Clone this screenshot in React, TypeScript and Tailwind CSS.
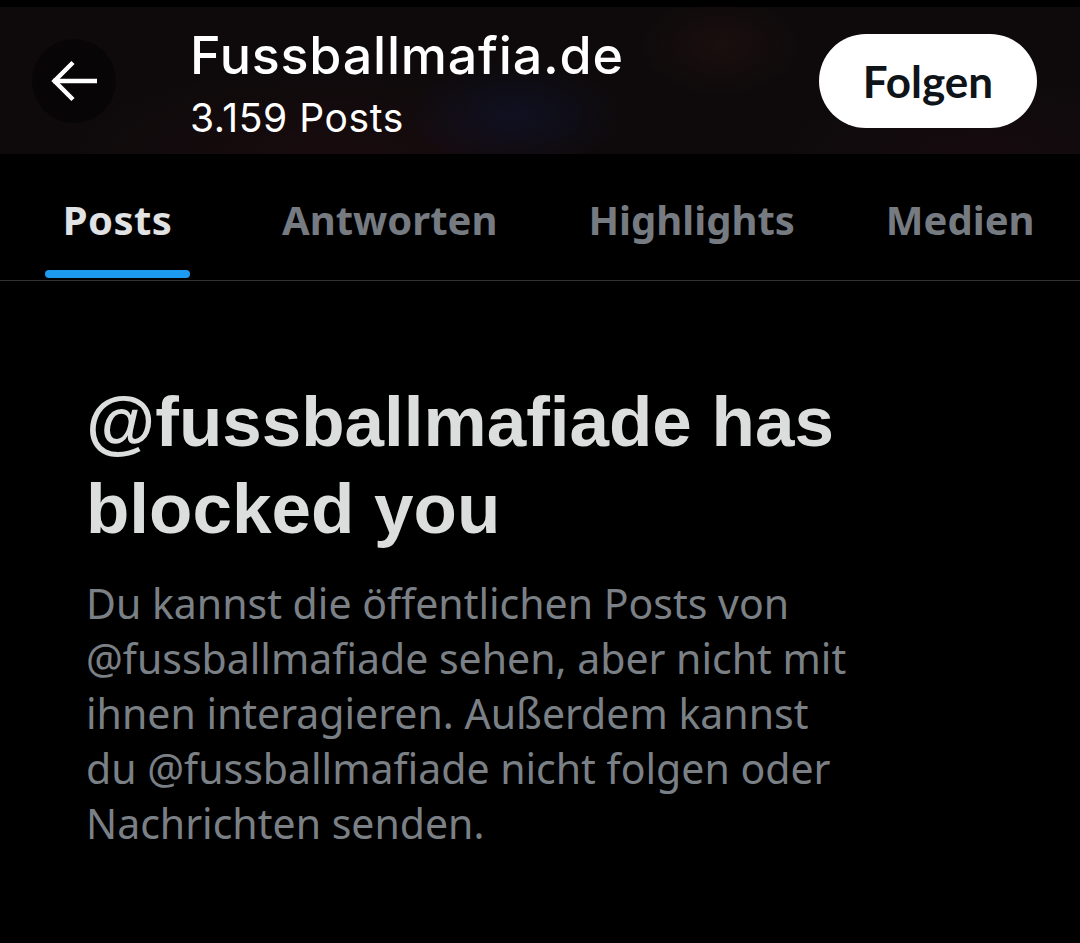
import React from "react";

function BackArrow() {
  return (
    <svg width="84" height="84" viewBox="0 0 84 84" aria-hidden="true">
      <circle cx="42" cy="42" r="42" fill="rgba(0,0,0,0.45)" />
      <path d="M21 42 H65" stroke="#ffffff" strokeWidth="4.5" fill="none" />
      <path d="M41 23.5 L22.5 42 L41 60.5" stroke="#ffffff" strokeWidth="4.5" fill="none" strokeLinejoin="miter" />
    </svg>
  );
}

export default function App() {
  return (
    <div className="w-[1080px] h-[943px] bg-black overflow-hidden">
      <div className="h-[7px] bg-black" />
      <header className="relative h-[147px] flex items-start bg-[#0e0a0b] bg-[radial-gradient(ellipse_110px_55px_at_515px_108px,rgba(16,24,60,0.45),transparent),radial-gradient(ellipse_80px_50px_at_720px_38px,rgba(55,25,22,0.3),transparent),radial-gradient(ellipse_260px_90px_at_330px_150px,rgba(50,14,22,0.3),transparent),radial-gradient(ellipse_200px_80px_at_980px_150px,rgba(45,14,28,0.25),transparent)]">
        <div className="ml-[32px] mt-[32px] shrink-0">
          <BackArrow />
        </div>
        <div className="ml-[74px] mt-[23px] flex flex-col font-['Inter',sans-serif] text-white">
          <div className="text-[52px] font-medium leading-none tracking-[0.015em]">Fussballmafia.de</div>
          <div className="mt-[16px] text-[39px] leading-none tracking-[0.015em]">3.159 Posts</div>
        </div>
        <div className="ml-auto mr-[43px] mt-[27px] w-[218px] h-[94px] rounded-full bg-white flex items-center justify-center">
          <span className="font-['Lato',sans-serif] font-bold text-[44px] leading-none text-[#0f1419]">Folgen</span>
        </div>
      </header>
      <nav className="flex items-start pt-[46px] pb-[2px] border-b border-[#2f3336] font-['Noto_Sans',sans-serif] font-bold text-[40px] leading-none">
        <div className="ml-[45px] w-[145px] flex flex-col items-center">
          <span className="text-[#e1e2e3] tracking-[0.01em]">Posts</span>
          <div className="mt-[30px] h-[8px] w-[145px] rounded-full bg-[#1d9bf0]" />
        </div>
        <span className="ml-[92px] text-[#767b82]">Antworten</span>
        <span className="ml-[91px] text-[#767b82]">Highlights</span>
        <span className="ml-[91px] text-[#767b82]">Medien</span>
      </nav>
      <main className="px-[86px] pt-[97px]">
        <h1 className="font-['Liberation_Sans',sans-serif] font-bold text-[71px] leading-[87px] text-[#dcdddd] whitespace-nowrap">
          @fussballmafiade has
          <br />
          blocked you
        </h1>
        <p className="mt-[24px] font-['Noto_Sans',sans-serif] text-[41px] leading-[55px] text-[#7b8086] whitespace-nowrap">
          Du kannst die öffentlichen Posts von
          <br />
          @fussballmafiade sehen, aber nicht mit
          <br />
          ihnen interagieren. Außerdem kannst
          <br />
          du @fussballmafiade nicht folgen oder
          <br />
          Nachrichten senden.
        </p>
      </main>
    </div>
  );
}
